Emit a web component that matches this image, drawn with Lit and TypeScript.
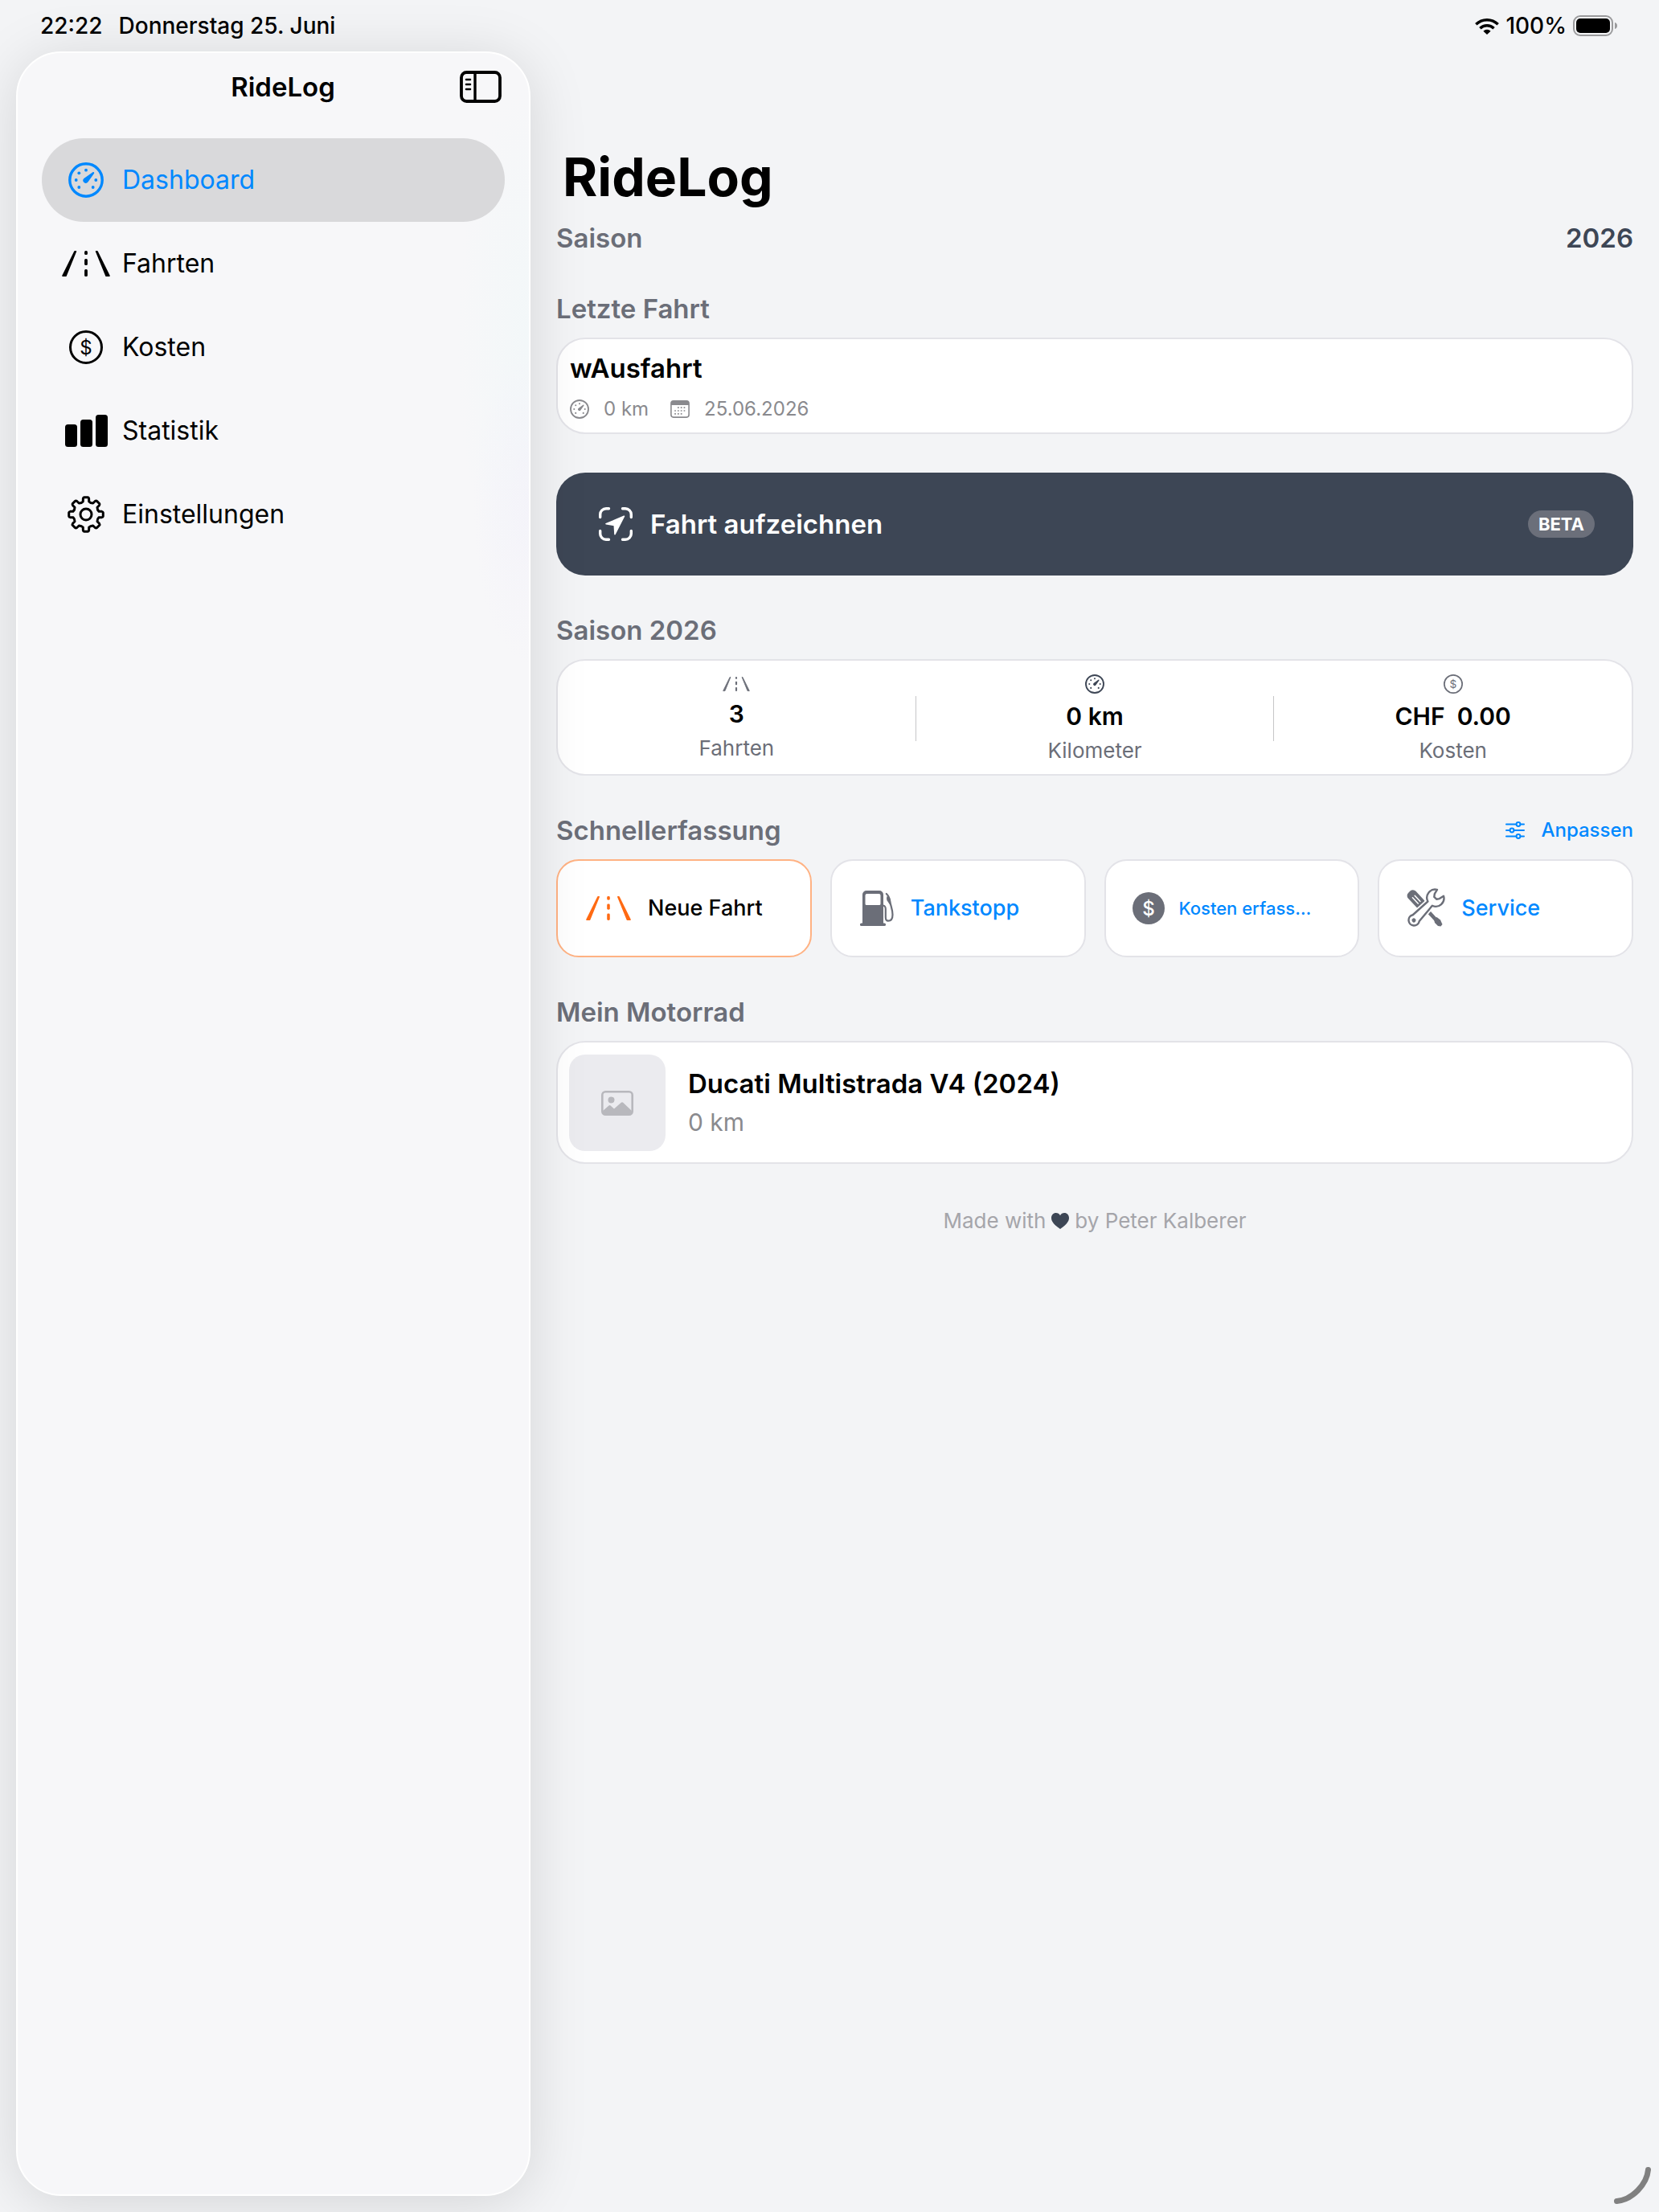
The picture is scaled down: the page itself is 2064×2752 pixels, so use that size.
import { LitElement, html, css, svg, nothing, type TemplateResult, type SVGTemplateResult } from "lit";
import { customElement, property, state } from "lit/decorators.js";
import { classMap } from "lit/directives/class-map.js";

interface IconDef {
  w: number;
  h: number;
  body: SVGTemplateResult;
}

/** Outline of an eight-tooth gear, centred in a 46 x 46 box. */
function gearPath(): string {
  const at = (r: number, deg: number) => {
    const a = (deg * Math.PI) / 180;
    return `${(23 + r * Math.cos(a)).toFixed(2)} ${(23 + r * Math.sin(a)).toFixed(2)}`;
  };
  let d = "";
  for (let i = 0; i < 8; i++) {
    const a = i * 45 - 90;
    d += `${i ? "L" : "M"}${at(16.5, a - 13)} L${at(20, a - 10.5)} Q${at(21.4, a - 9)} ${at(21.4, a - 6)}`;
    d += ` L${at(21.4, a + 6)} Q${at(21.4, a + 9)} ${at(20, a + 10.5)} L${at(16.5, a + 13)}`;
    d += ` Q${at(15, a + 22.5)} ${at(16.5, a + 32)} `;
  }
  return d + "Z";
}

const ICONS: Record<string, IconDef> = {
  gauge: {
    w: 44,
    h: 44,
    body: svg`
      <circle cx="22" cy="22" r="20.2" fill="none" stroke="currentColor" stroke-width="3.4"/>
      <g fill="currentColor">
        <circle cx="22" cy="9.7" r="1.9"/><circle cx="13.3" cy="13.3" r="1.9"/>
        <circle cx="9.7" cy="22" r="1.9"/><circle cx="34.3" cy="22" r="1.9"/>
        <circle cx="13.3" cy="31" r="1.9"/><circle cx="30.7" cy="31" r="1.9"/>
        <path d="M31.8 12.2c.6.5.5 1.1.1 1.8L24.4 24.6a3.4 3.4 0 1 1-5-4.6L30 12.4c.7-.5 1.3-.6 1.8-.2z"/>
      </g>`,
  },
  road: {
    w: 60,
    h: 32,
    body: svg`
      <g fill="currentColor" stroke="currentColor" stroke-width="1.6" stroke-linejoin="round">
        <path d="M1 31.2 16 .8h1.4L5 31.2z"/><path d="M59 31.2 44 .8h-1.4L55 31.2z"/>
      </g>
      <g fill="currentColor">
        <rect x="28.1" y="0" width="3.8" height="5" rx="1.6"/>
        <rect x="28.1" y="10" width="3.8" height="8" rx="1.6"/>
        <rect x="28.1" y="23" width="3.8" height="9" rx="1.6"/>
      </g>`,
  },
  coin: {
    w: 42,
    h: 42,
    body: svg`
      <circle cx="21" cy="21" r="19.5" fill="none" stroke="currentColor" stroke-width="3"/>
      <text x="21" y="29.5" text-anchor="middle" font-family="Inter, sans-serif" font-size="24" fill="currentColor">$</text>`,
  },
  coinFill: {
    w: 40,
    h: 40,
    body: svg`
      <circle cx="20" cy="20" r="20" fill="currentColor"/>
      <text x="20" y="28.5" text-anchor="middle" font-family="Inter, sans-serif" font-size="24" fill="#fff">$</text>`,
  },
  bars: {
    w: 53,
    h: 40,
    body: svg`
      <g fill="currentColor">
        <rect x="0" y="12" width="15" height="28" rx="3.5"/>
        <rect x="19" y="6" width="15" height="34" rx="3.5"/>
        <rect x="38" y="0" width="15" height="40" rx="3.5"/>
      </g>`,
  },
  gear: {
    w: 46,
    h: 46,
    body: svg`
      <g fill="none" stroke="currentColor" stroke-width="3" stroke-linejoin="round">
        <path d=${gearPath()}/><circle cx="23" cy="23" r="7"/>
      </g>`,
  },
  sidebar: {
    w: 52,
    h: 40,
    body: svg`
      <g fill="none" stroke="currentColor" stroke-linecap="round">
        <rect x="2" y="2" width="48" height="36" rx="6.5" stroke-width="3.8"/>
        <path d="M19 2v36" stroke-width="3.4"/>
        <path d="M8 11h5M8 17h5M8 23h5" stroke-width="2.6"/>
      </g>`,
  },
  wifi: {
    w: 30,
    h: 21,
    body: svg`
      <g fill="none" stroke="currentColor" stroke-width="3.4">
        <path d="M1.3 8.3a19.5 19.5 0 0 1 27.4 0"/>
        <path d="M6.4 13.3a12.3 12.3 0 0 1 17.2 0"/>
      </g>
      <path d="M10.4 16.7a6.6 6.6 0 0 1 9.2 0L15 21z" fill="currentColor"/>`,
  },
  battery: {
    w: 56,
    h: 26,
    body: svg`
      <rect x="1" y="1" width="48" height="24" rx="8" fill="none" stroke="#9a9a9c" stroke-width="2"/>
      <rect x="4" y="4" width="42" height="18" rx="5" fill="currentColor"/>
      <path d="M52 9c2 .6 3 2 3 4s-1 3.4-3 4z" fill="#9a9a9c"/>`,
  },
  calendar: {
    w: 24,
    h: 22,
    body: svg`
      <rect x=".9" y=".9" width="22.2" height="20.2" rx="3" fill="none" stroke="currentColor" stroke-width="1.6"/>
      <path d="M1 6V3.5A2.5 2.5 0 0 1 3.5 1h17A2.5 2.5 0 0 1 23 3.5V6z" fill="currentColor"/>
      <path d="M9 9.200h10.500M5.200 13h14.300M5.200 16.800h10.500" stroke="currentColor" stroke-width="1.700" stroke-dasharray="1.700 2.100"/>`,
  },
  locate: {
    w: 42,
    h: 42,
    body: svg`
      <path d="M1.7 12.5V9a7.3 7.3 0 0 1 7.3-7.3h3.5M29.5 1.7H33A7.3 7.3 0 0 1 40.3 9v3.5M40.3 29.5V33a7.3 7.3 0 0 1-7.3 7.3h-3.5M12.5 40.3H9A7.3 7.3 0 0 1 1.7 33v-3.5"
        fill="none" stroke="currentColor" stroke-width="3.4" stroke-linecap="round"/>
      <path d="M31.4 11.3 9 20.8l10.300 1.700.7 11.200z" fill="currentColor" stroke="currentColor" stroke-width="1.6" stroke-linejoin="round"/>`,
  },
  sliders: {
    w: 24,
    h: 22,
    body: svg`
      <g fill="none" stroke="currentColor" stroke-width="2" stroke-linecap="round">
        <path d="M1 3.5h12M19 3.5h4M1 11h4M11 11h12M1 18.5h12M19 18.5h4"/>
        <circle cx="16" cy="3.5" r="2.4"/><circle cx="8" cy="11" r="2.4"/><circle cx="16" cy="18.5" r="2.4"/>
      </g>`,
  },
  fuel: {
    w: 42,
    h: 44,
    body: svg`
      <path fill-rule="evenodd" d="M3 41V5a5 5 0 0 1 5-5h16a5 5 0 0 1 5 5v36zM8.5 4A2 2 0 0 0 6.5 6v10.5a1.5 1.5 0 0 0 1.5 1.5h16a1.5 1.5 0 0 0 1.5-1.5V6a2 2 0 0 0-2-2z" fill="currentColor"/>
      <rect x="0" y="40.5" width="32" height="3.5" rx="1.6" fill="currentColor"/>
      <path d="M28.5 18.5c2.4.4 3.3 2 3.3 4.5v10c0 3 .9 4.7 3.2 4.7 3.8 0 5.5-3.4 5.5-7.700 0-7-2.500-11-3.300-17-.4-3.300-2.200-7-4.400-9" fill="none" stroke="currentColor" stroke-width="2.2" stroke-linecap="round"/>
      <path d="M33.5 7c-.6 2-.6 4 .2 5.5l4 6 .3-6.500c-.6-2.400-2.500-4.500-4.500-5z" fill="currentColor"/>`,
  },
  tools: {
    w: 46,
    h: 46,
    body: svg`
      <path d="M24 25 37 39" stroke="currentColor" stroke-width="4.6"/>
      <path d="M33 36.5l3.5-2.5 4.5 3.5 2.5 5.5-2 2.5-3.5-.5-4-4z" fill="currentColor"/>
      <g transform="rotate(47 0 0) translate(1.5 -6.4)">
        <rect x="2" y="0" width="29" height="13" rx="5" fill="currentColor"/>
        <path d="M10 4.6h10M10 8.4h10" stroke="#fff" stroke-width="1.5" stroke-linecap="round"/>
      </g>
      <g transform="translate(8 38) rotate(-46)">
        <path d="M3 -6.5 28 -5 A11 11 0 0 1 48 -6 L42.5 -4.5 L38 -3.5 L38 3.5 L42.5 4.5 L48 6 A11 11 0 0 1 28 5 L3 6.5 A7 7 0 1 1 3 -6.5Z" fill="#fff" stroke="#fff" stroke-width="4"/>
        <path d="M4 -5.6 29 -3.8 A10.2 10.2 0 0 1 47.5 -5.6 L41.5 -4.2 L38.5 -2 L38.5 2 L41.5 4.2 L47.5 5.6 A10.2 10.2 0 0 1 29 3.8 L4 5.6 A6.7 6.7 0 1 1 4 -5.6Z" fill="#fff" stroke="currentColor" stroke-width="2.4" stroke-linejoin="round"/>
        <circle cx="0" cy="0" r="2.5" fill="currentColor"/>
      </g>`,
  },
  photo: {
    w: 40,
    h: 31,
    body: svg`
      <rect x="1.3" y="1.3" width="37.4" height="28.4" rx="4" fill="none" stroke="currentColor" stroke-width="2.6"/>
      <circle cx="12.5" cy="11.5" r="4" fill="currentColor"/>
      <path d="M2 25l7.5-6.500a1.600 1.600 0 0 1 2.100 0L16 22.500l8.800-7.800a1.800 1.800 0 0 1 2.400 0L38 25v2a3 3 0 0 1-3 3H5a3 3 0 0 1-3-3z" fill="currentColor"/>`,
  },
  heart: {
    w: 22,
    h: 20,
    body: svg`<path d="M11 20C5 16 0 11.5 0 6.3 0 2.6 2.5 0 5.8 0 8 0 9.9 1.2 11 3.2 12.1 1.2 14 0 16.2 0 19.5 0 22 2.6 22 6.3 22 11.5 17 16 11 20z" fill="currentColor"/>`,
  },
};

function icon(name: string, width?: number): TemplateResult {
  const def = ICONS[name];
  const w = width ?? def.w;
  const h = Math.round((def.h * w) / def.w);
  return html`<svg width=${w} height=${h} viewBox="0 0 ${def.w} ${def.h}" aria-hidden="true">${def.body}</svg>`;
}

const base = css`
  * {
    box-sizing: border-box;
    margin: 0;
  }
  svg {
    display: block;
    flex: none;
    overflow: visible;
  }
  button {
    font: inherit;
    color: inherit;
    background: none;
    border: 0;
    padding: 0;
    text-align: left;
    cursor: pointer;
  }
`;

@customElement("status-bar")
class StatusBar extends LitElement {
  static styles = [
    base,
    css`
      :host {
        display: flex;
        align-items: center;
        justify-content: space-between;
        height: 64px;
        padding: 0 51px 0 50px;
        font-size: 28px;
        font-weight: 500;
        line-height: 32px;
      }
      .group {
        display: flex;
        align-items: center;
      }
      .left {
        gap: 20px;
      }
      .right {
        gap: 8px;
      }
    `,
  ];

  render() {
    return html`
      <div class="group left"><span>22:22</span><span>Donnerstag 25. Juni</span></div>
      <div class="group right">${icon("wifi")}<span>100%</span>${icon("battery")}</div>
    `;
  }
}

const NAV = [
  { id: "dashboard", label: "Dashboard", icon: "gauge" },
  { id: "fahrten", label: "Fahrten", icon: "road" },
  { id: "kosten", label: "Kosten", icon: "coin" },
  { id: "statistik", label: "Statistik", icon: "bars" },
  { id: "einstellungen", label: "Einstellungen", icon: "gear" },
];

@customElement("side-bar")
class SideBar extends LitElement {
  @state() private active = "dashboard";

  static styles = [
    base,
    css`
      :host {
        display: block;
        padding: 16px 30px;
        border: 2px solid #fff;
        border-radius: 56px;
        background:
          radial-gradient(ellipse 70px 200px at 100% 560px, rgba(243, 241, 250, 0.6), transparent),
          radial-gradient(ellipse 90px 320px at 100% 360px, rgba(240, 248, 249, 0.6), transparent),
          #f7f7f9;
        box-shadow: 0 8px 72px rgba(0, 0, 0, 0.13);
      }
      .head {
        display: grid;
        grid-template-columns: 52px 1fr 52px;
        align-items: center;
        height: 52px;
        margin-bottom: 38px;
      }
      .title {
        grid-column: 2;
        padding-left: 24px;
        font-size: 33px;
        font-weight: 600;
        line-height: 40px;
        text-align: center;
      }
      .toggle {
        justify-self: end;
        margin-right: 4px;
      }
      .item {
        display: flex;
        align-items: center;
        gap: 12px;
        height: 104px;
        padding-left: 22px;
        border-radius: 52px;
        color: #000;
        font-size: 32px;
        line-height: 40px;
        text-decoration: none;
      }
      .item.active {
        background: #d9d9db;
        color: #08f;
      }
      .glyph {
        display: flex;
        justify-content: center;
        width: 66px;
      }
    `,
  ];

  render() {
    return html`
      <div class="head">
        <h2 class="title">RideLog</h2>
        <button class="toggle" aria-label="Seitenleiste">${icon("sidebar")}</button>
      </div>
      <nav>
        ${NAV.map(
          (n) => html`<a
            href="#${n.id}"
            class=${classMap({ item: true, active: n.id === this.active })}
            aria-current=${n.id === this.active ? "page" : nothing}
            @click=${() => (this.active = n.id)}
            ><span class="glyph">${icon(n.icon)}</span>${n.label}</a
          >`,
        )}
      </nav>
    `;
  }
}

@customElement("stat-cell")
class StatCell extends LitElement {
  @property() icon = "";
  @property({ type: Number }) size = 24;
  @property() value = "";
  @property() label = "";

  static styles = [
    base,
    css`
      :host {
        display: flex;
        flex: 1;
        flex-direction: column;
        align-items: center;
        justify-content: center;
        gap: 10px;
        color: #6b6e78;
      }
      :host([icon="gauge"]) svg {
        color: #3d4655;
      }
      .value {
        color: #000;
        font-size: 30px;
        font-weight: 600;
        line-height: 36px;
        white-space: pre;
      }
      .label {
        font-size: 26px;
        line-height: 30px;
      }
    `,
  ];

  render() {
    return html`${icon(this.icon, this.size)}
      <span class="value">${this.value}</span>
      <span class="label">${this.label}</span>`;
  }
}

const QUICK = [
  { label: "Neue Fahrt", icon: "road", size: 56, kind: "primary" },
  { label: "Tankstopp", icon: "fuel", size: 42, kind: "" },
  { label: "Kosten erfass…", icon: "coinFill", size: 40, kind: "small" },
  { label: "Service", icon: "tools", size: 46, kind: "" },
];

@customElement("dashboard-view")
class DashboardView extends LitElement {
  static styles = [
    base,
    css`
      :host {
        display: flex;
        flex-direction: column;
        gap: 48px;
        padding: 116px 32px 64px;
      }
      .title {
        padding-left: 8px;
        font-size: 66px;
        font-weight: 700;
        line-height: 80px;
      }
      .row {
        display: flex;
        align-items: center;
        justify-content: space-between;
      }
      .season {
        margin-top: 16px;
      }
      .heading {
        color: #6b6e78;
        font-size: 33px;
        font-weight: 600;
        line-height: 40px;
      }
      .year {
        color: #3d4655;
      }
      .block {
        display: flex;
        flex-direction: column;
        gap: 16px;
      }
      .card {
        border: 2px solid #e3e3e8;
        border-radius: 36px;
        background: #fff;
      }
      .ride {
        display: flex;
        flex-direction: column;
        gap: 16px;
        padding: 16px 15px 14px;
      }
      .name {
        font-size: 33px;
        font-weight: 600;
        line-height: 40px;
      }
      .meta {
        display: flex;
        align-items: center;
        gap: 27px;
        color: #8a8a8e;
        font-size: 24px;
        line-height: 30px;
      }
      .meta span {
        display: flex;
        align-items: center;
        gap: 18px;
      }
      .record {
        display: flex;
        align-items: center;
        gap: 22px;
        width: 100%;
        height: 128px;
        padding: 0 48px 0 53px;
        border-radius: 36px;
        background: #3d4655;
        color: #fff;
        font-size: 33px;
        font-weight: 600;
        line-height: 40px;
      }
      .beta {
        margin-left: auto;
        padding: 0 13px;
        border-radius: 17px;
        background: #6b6f7a;
        font-size: 22px;
        font-weight: 700;
        line-height: 34px;
      }
      .stats {
        display: flex;
        align-items: center;
        height: 145px;
        padding-top: 2px;
      }
      .rule {
        width: 1px;
        height: 56px;
        background: #c6c6c8;
      }
      .customize {
        display: flex;
        align-items: center;
        gap: 20px;
        color: #08f;
        font-size: 24px;
        font-weight: 500;
        line-height: 32px;
      }
      .quick {
        display: grid;
        grid-template-columns: repeat(4, minmax(0, 1fr));
        gap: 23px;
      }
      .action {
        display: flex;
        align-items: center;
        gap: 21px;
        height: 122px;
        padding-left: 35px;
        border-radius: 28px;
        color: #6b6e78;
        font-size: 27px;
        font-weight: 500;
        line-height: 36px;
        white-space: nowrap;
      }
      .action span {
        color: #08f;
      }
      .action.small {
        gap: 18px;
        padding-left: 33px;
        font-size: 22px;
      }
      .action.primary {
        border-color: #ffb283;
        color: #ff6a13;
      }
      .action.primary span {
        color: #000;
      }
      .bike {
        display: flex;
        align-items: center;
        gap: 28px;
        padding: 15px 14px 14px;
      }
      .thumb {
        display: grid;
        place-items: center;
        width: 120px;
        height: 120px;
        border-radius: 20px;
        background: #ebebef;
        color: #b8b8bd;
      }
      .bike-text {
        display: flex;
        flex-direction: column;
        gap: 8px;
      }
      .km {
        color: #8a8a8e;
        font-size: 30px;
        line-height: 40px;
      }
      .credit {
        display: flex;
        align-items: center;
        justify-content: center;
        gap: 7px;
        margin-top: 7px;
        color: #a5a5aa;
        font-size: 26px;
        line-height: 32px;
      }
      .credit svg {
        color: #3d4655;
      }
    `,
  ];

  render() {
    return html`
      <header>
        <h1 class="title">RideLog</h1>
        <div class="row season heading"><span>Saison</span><span class="year">2026</span></div>
      </header>
      <section class="block">
        <h2 class="heading">Letzte Fahrt</h2>
        <div class="card ride">
          <h3 class="name">wAusfahrt</h3>
          <div class="meta">
            <span>${icon("gauge", 24)}0 km</span><span>${icon("calendar")}25.06.2026</span>
          </div>
        </div>
      </section>
      <button class="record">${icon("locate")}<span>Fahrt aufzeichnen</span><span class="beta">BETA</span></button>
      <section class="block">
        <h2 class="heading">Saison 2026</h2>
        <div class="card stats">
          <stat-cell icon="road" size="34" value="3" label="Fahrten"></stat-cell>
          <div class="rule"></div>
          <stat-cell icon="gauge" value="0 km" label="Kilometer"></stat-cell>
          <div class="rule"></div>
          <stat-cell icon="coin" value="CHF  0.00" label="Kosten"></stat-cell>
        </div>
      </section>
      <section class="block">
        <div class="row">
          <h2 class="heading">Schnellerfassung</h2>
          <button class="customize">${icon("sliders")}Anpassen</button>
        </div>
        <div class="quick">
          ${QUICK.map(
            (q) => html`<button class="card action ${q.kind}">${icon(q.icon, q.size)}<span>${q.label}</span></button>`,
          )}
        </div>
      </section>
      <section class="block">
        <h2 class="heading">Mein Motorrad</h2>
        <div class="card bike">
          <div class="thumb">${icon("photo")}</div>
          <div class="bike-text">
            <h3 class="name">Ducati Multistrada V4 (2024)</h3>
            <span class="km">0 km</span>
          </div>
        </div>
      </section>
      <footer class="credit"><span>Made with</span>${icon("heart")}<span>by Peter Kalberer</span></footer>
    `;
  }
}

@customElement("app-root")
class AppRoot extends LitElement {
  static styles = [
    base,
    css`
      :host {
        display: flex;
        flex-direction: column;
        position: relative;
        min-height: 100vh;
        overflow: hidden;
        box-sizing: border-box;
        background: #f3f4f6;
        color: #000;
        font-family: Inter, "Liberation Sans", sans-serif;
      }
      status-bar {
        position: relative;
        z-index: 2;
      }
      .shell {
        display: flex;
        flex: 1;
      }
      side-bar {
        position: relative;
        z-index: 1;
        flex: none;
        box-sizing: border-box;
        width: 640px;
        max-width: 40vw;
        margin: 0 0 20px 20px;
      }
      dashboard-view {
        flex: 1;
        min-width: 0;
      }
      .corner {
        position: absolute;
        right: 9px;
        bottom: 9px;
      }
    `,
  ];

  render() {
    return html`
      <status-bar></status-bar>
      <div class="shell">
        <side-bar></side-bar>
        <dashboard-view></dashboard-view>
      </div>
      <svg class="corner" width="48" height="48" viewBox="0 0 48 48" aria-hidden="true">
        <path d="M43.5 4.5C42 22 24 42 4.5 43.5" fill="none" stroke="#808080" stroke-width="7" stroke-linecap="round" />
      </svg>
    `;
  }
}
